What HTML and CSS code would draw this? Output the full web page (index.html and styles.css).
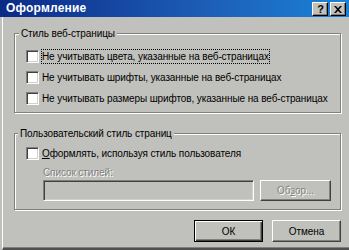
FILE: index.html
```html
<!DOCTYPE html>
<html>
<head>
<meta charset="utf-8">
<link rel="stylesheet" href="styles.css">
</head>
<body>
<div class="window">
  <div class="titlebar">
    <span class="title">Оформление</span>
    <div class="tb-buttons">
      <span class="tb-btn tb-help">?</span>
      <span class="tb-btn tb-close">
        <svg width="8" height="7" viewBox="0 0 8 7"><path d="M0 0h2l2 2.2L6 0h2L5 3.5 8 7H6L4 4.8 2 7H0l3-3.5z" fill="#000"/></svg>
      </span>
    </div>
  </div>
  <div class="client">
    <div class="group g1">
      <div class="group-title">Стиль веб-страницы</div>
      <div class="rows">
        <div class="row"><span class="cb"></span><span class="lbl focus">Не учитывать цвета, указанные на веб-страницах</span></div>
        <div class="row"><span class="cb"></span><span class="lbl">Не учитывать шрифты, указанные на веб-страницах</span></div>
        <div class="row"><span class="cb"></span><span class="lbl">Не учитывать размеры шрифтов, указанные на веб-страницах</span></div>
      </div>
    </div>
    <div class="group g2">
      <div class="group-title">Пользовательский стиль страниц</div>
      <div class="rows2">
        <div class="row"><span class="cb"></span><span class="lbl"><u>О</u>формлять, используя стиль пользователя</span></div>
        <div class="sub">
          <div class="sublabel disabled">Список стилей:</div>
          <div class="field-row">
            <div class="field"></div>
            <div class="btn browse disabled">Об<u>з</u>ор...</div>
          </div>
        </div>
      </div>
    </div>
    <div class="actions">
      <div class="btn default">ОК</div>
      <div class="btn">Отмена</div>
    </div>
  </div>
</div>
</body>
</html>
```
FILE: styles.css
```css
html, body {
  margin: 0;
  padding: 0;
}
body {
  font-family: "Liberation Sans", Arial, sans-serif;
  font-size: 10px;
  letter-spacing: -0.1px;
  line-height: 13px;
  color: #000;
}
.window {
  width: 349px;
  height: 250px;
  background: #c0c1bc;
  display: flex;
  flex-direction: column;
  overflow: hidden;
}
.titlebar {
  height: 17px;
  flex: none;
  background: linear-gradient(to right, #0b2a86 0%, #1d5fb8 60%, #1a82d6 100%);
  display: flex;
  align-items: center;
  justify-content: space-between;
  padding: 0 3px 0 6px;
}
.title {
  color: #fff;
  font-weight: bold;
  font-size: 12px;
  letter-spacing: 0.2px;
}
.tb-buttons {
  display: flex;
  gap: 2px;
  margin-top: 1px;
}
.tb-btn {
  width: 16px;
  height: 14px;
  box-sizing: border-box;
  background: #c0c1bc;
  border-top: 1px solid #fff;
  border-left: 1px solid #fff;
  border-right: 1px solid #000;
  border-bottom: 1px solid #000;
  box-shadow: inset -1px -1px 0 #808080;
  display: flex;
  align-items: center;
  justify-content: center;
  font-weight: bold;
  font-size: 11px;
  line-height: 12px;
  letter-spacing: 0;
}
.tb-help {
  padding-left: 1px;
}
.client {
  flex: 1;
  margin-left: 2px;
  border-left: 1px solid #fff;
  border-bottom: 2px solid #505050;
  box-shadow: inset 0 -1px 0 #808080;
  padding: 16px 8px 0 11px;
  display: flex;
  flex-direction: column;
}
.group {
  border: 1px solid #808080;
  box-shadow: 1px 1px 0 #fff, inset 1px 1px 0 #fff;
}
.g2 {
  margin-top: 20px;
}
.group-title {
  margin: -7px 0 0 4px;
  padding: 0 2px;
  width: fit-content;
  background: #c0c1bc;
}
.g2 .group-title {
  margin-left: 3px;
}
.rows {
  padding: 9px 0 6px 11px;
  display: flex;
  flex-direction: column;
  gap: 6px;
}
.rows2 {
  padding: 6px 0 8px 11px;
  display: flex;
  flex-direction: column;
}
.row {
  height: 15px;
  display: flex;
  align-items: center;
}
.cb {
  width: 13px;
  height: 13px;
  box-sizing: border-box;
  background: #fff;
  border: 1px solid;
  border-color: #808080 #fff #fff #808080;
  box-shadow: inset 1px 1px 0 #404040, inset -1px -1px 0 #d4d0c8;
  flex: none;
}
.lbl {
  margin-left: 2px;
  border: 1px dotted transparent;
  white-space: nowrap;
}
.lbl.focus {
  border-color: #000;
}
.sub {
  padding-left: 17px;
}
.sublabel {
  margin-top: 5px;
}
.disabled {
  color: #808080;
  text-shadow: 1px 1px 0 #fff;
}
.field-row {
  margin-top: 1px;
  display: flex;
  gap: 6px;
}
.field {
  width: 211px;
  height: 21px;
  box-sizing: border-box;
  border: 1px solid;
  border-color: #808080 #fff #fff #808080;
  box-shadow: inset 1px 1px 0 #404040, inset -1px -1px 0 #d4d0c8;
  background: #c0c1bc;
}
.btn {
  height: 22px;
  width: 69px;
  box-sizing: border-box;
  border: 1px solid;
  border-color: #fff #404040 #404040 #fff;
  box-shadow: inset -1px -1px 0 #808080;
  display: flex;
  align-items: center;
  justify-content: center;
  background: #c0c1bc;
}
.btn.browse {
  width: 71px;
  height: 21px;
}
.btn.default {
  border: 1px solid #000;
  box-shadow: inset 1px 1px 0 #fff, inset -1px -1px 0 #404040, inset -2px -2px 0 #808080;
}
.actions {
  margin-top: 10px;
  display: flex;
  justify-content: flex-end;
  gap: 9px;
}
```
